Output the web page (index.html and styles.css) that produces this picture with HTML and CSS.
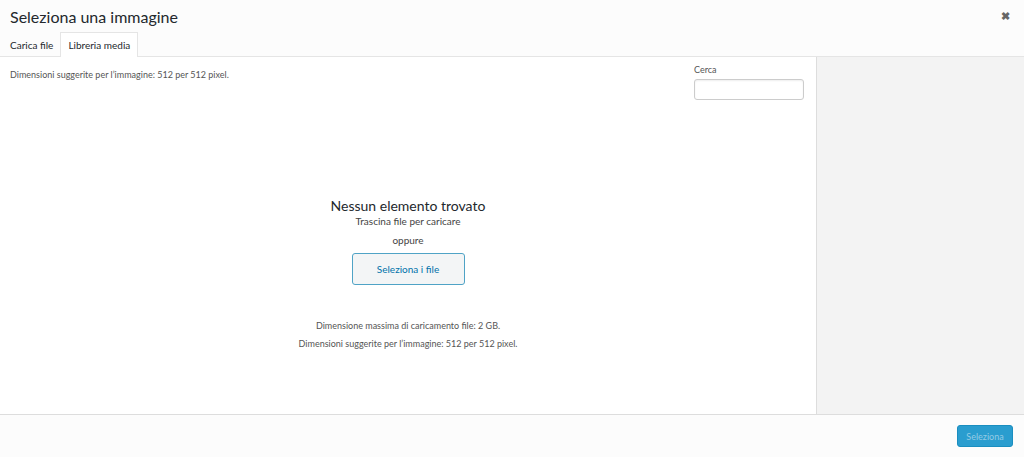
FILE: index.html
```html
<!doctype html>
<html>
	<head>
		<title>Seleziona una immagine</title>
		<meta charset="UTF-8">
		<link rel="stylesheet" href="styles.css">
	</head>
	<body>
		<div class="modal">
			<div class="head">
				<div class="title-row">
					<h1>Seleziona una immagine</h1>
					<span class="close">&#10006;</span>
				</div>
				<div class="tabs">
					<span class="tab">Carica file</span>
					<span class="tab active">Libreria media</span>
				</div>
			</div>
			<div class="middle">
				<div class="browser">
					<div class="toolbar">
						<p class="hint">Dimensioni suggerite per l’immagine: 512 per 512 pixel.</p>
						<div class="search">
							<label>Cerca</label>
							<input type="search">
						</div>
					</div>
					<div class="empty">
						<h2>Nessun elemento trovato</h2>
						<p class="drop">Trascina file per caricare</p>
						<p class="or">oppure</p>
						<button class="pick">Seleziona i file</button>
						<p class="info">Dimensione massima di caricamento file: 2 GB.</p>
						<p class="info">Dimensioni suggerite per l’immagine: 512 per 512 pixel.</p>
					</div>
				</div>
				<div class="sidebar"></div>
			</div>
			<div class="foot">
				<button class="select">Seleziona</button>
			</div>
		</div>
	</body>
</html>
```

FILE: styles.css
```css
html, body {
	margin: 0;
	height: 100%;
}
body {
	font-family: Lato, "Open Sans", sans-serif;
	color: #444;
	background: #fff;
}
.modal {
	display: flex;
	flex-direction: column;
	height: 457px;
}
.head {
	background: #fcfcfc;
	border-bottom: 1px solid #e5e5e5;
}
.title-row {
	display: flex;
	justify-content: space-between;
	align-items: center;
	height: 32px;
	padding: 0 14px 0 10px;
}
h1 {
	margin: 0;
	font-size: 16px;
	font-weight: 400;
	color: #23282d;
}
.close {
	font-size: 11px;
	color: #666;
	font-weight: bold;
}
.tabs {
	display: flex;
	height: 24px;
}
.tab {
	font-size: 10px;
	padding: 6px 6px 0 9px;
	color: #23282d;
	border: 1px solid transparent;
	border-bottom: none;
	margin-bottom: -1px;
}
.tab.active {
	background: #fff;
	border-color: #e5e5e5;
	padding: 6px 7px 0;
}
.middle {
	flex: 1;
	display: flex;
}
.browser {
	flex: 1;
	display: flex;
	flex-direction: column;
}
.toolbar {
	display: flex;
	justify-content: space-between;
	padding: 6px 12px 0 10px;
}
.hint {
	margin: 6px 0 0;
	font-size: 9px;
	color: #555;
}
.search label {
	display: block;
	font-size: 9px;
	color: #555;
	margin: 1px 0 4px;
}
.search input {
	display: block;
	box-sizing: border-box;
	width: 110px;
	height: 21px;
	border: 1px solid #ccc;
	border-radius: 3px;
	margin: 0;
	box-shadow: inset 0 1px 2px rgba(0,0,0,0.07);
}
.empty {
	display: flex;
	flex-direction: column;
	align-items: center;
	padding-top: 97px;
}
h2 {
	margin: 0;
	font-size: 14px;
	font-weight: 400;
	color: #23282d;
	line-height: 17px;
}
.drop {
	margin: 0;
	font-size: 10px;
	line-height: 14px;
}
.or {
	margin: 5px 0 0;
	font-size: 10px;
	line-height: 14px;
}
.pick {
	margin-top: 6px;
	box-sizing: border-box;
	width: 113px;
	height: 32px;
	background: #f3f5f6;
	border: 1px solid #4fa3c6;
	border-radius: 3px;
	color: #0073aa;
	font-family: inherit;
	font-size: 10px;
}
.info {
	margin: 0;
	font-size: 9px;
	color: #555;
	line-height: 18px;
}
.pick + .info {
	margin-top: 32px;
}
.sidebar {
	width: 207px;
	background: #f3f3f3;
	border-left: 1px solid #ddd;
}
.foot {
	height: 42px;
	background: #fcfcfc;
	border-top: 1px solid #ddd;
	display: flex;
	justify-content: flex-end;
	align-items: center;
	padding-right: 11px;
}
.select {
	width: 56px;
	height: 22px;
	background: #2a9dcf;
	border: 1px solid #1a8ec0;
	border-radius: 3px;
	color: #94cbe5;
	font-family: inherit;
	font-size: 9px;
	padding: 0;
}
```
